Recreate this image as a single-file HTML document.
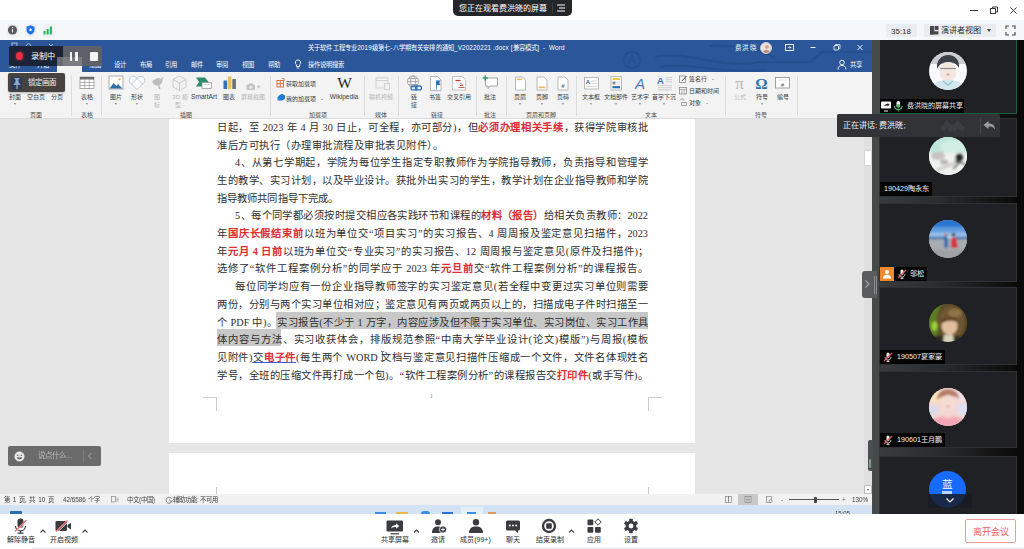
<!DOCTYPE html>
<html lang="zh-CN"><head><meta charset="utf-8">
<style>
html,body{margin:0;padding:0;}
body{width:1024px;height:549px;overflow:hidden;position:relative;background:#fff;font-family:"Liberation Sans",sans-serif;}
.a{position:absolute;}
.t{position:absolute;white-space:nowrap;line-height:1;}
/* top bars */
#top1{left:0;top:0;width:1024px;height:20px;background:#fff;}
#top2{left:0;top:20px;width:1024px;height:20px;background:#f6f7f9;}
#pill{left:453px;top:0;width:119px;height:16px;background:#25262a;border-radius:0 0 5px 5px;}
/* share */
#share{left:0;top:40px;width:872px;height:474px;background:#e6e6e6;overflow:hidden;}
#sharein{position:absolute;left:0;top:0;width:872px;height:474px;filter:blur(0.45px);}
#wtitle{left:0;top:0;width:875px;height:32px;background:#2b579a;}
#ribbon{left:0;top:32px;width:875px;height:47px;background:#f3f3f3;box-sizing:border-box;border-bottom:1px solid #dcdcdc;}
#page1{left:169px;top:79px;width:526px;height:324px;background:#fff;}
#page2{left:169px;top:413px;width:526px;height:41px;background:#fff;}
#status{left:0;top:454px;width:875px;height:11px;background:#f1f1f1;}
#taskbar{left:0;top:465px;width:875px;height:9px;background:#d3e3f3;}
.ln{position:absolute;left:217px;width:431px;font-family:"Liberation Serif",serif;font-size:10.3px;line-height:14px;height:14px;color:#2e2e2e;text-align:justify;text-align-last:justify;overflow:hidden;}
.ln.s{text-align-last:left;}
.r{color:#dc2f33;font-weight:bold;}
.hl{}
.u{text-decoration:underline;text-decoration-color:#3a5fd0;}

.rl{position:absolute;font-size:6px;line-height:8px;color:#3a3a3a;white-space:nowrap;transform:translateX(-50%);text-align:center;}
.rl.g{color:#b5b5b5;}
.gl{position:absolute;top:71px;font-size:6px;line-height:8px;color:#4a4a4a;white-space:nowrap;transform:translateX(-50%);}
.sep{position:absolute;top:36px;width:1px;height:40px;background:#dcdcdc;}
.tab{position:absolute;top:20px;font-size:6.3px;line-height:9px;color:#fff;white-space:nowrap;transform:translateX(-50%);}
.dd{position:absolute;top:63px;width:0;height:0;border-left:1.5px solid transparent;border-right:1.5px solid transparent;border-top:2px solid #888;transform:translateX(-50%);}
.ic{position:absolute;}
/* right panel */
#panel{left:872px;top:40px;width:152px;height:474px;background:#0d0d0e;overflow:hidden;}
.tile{position:absolute;left:7px;width:138px;background:#202124;border:1px solid #303134;box-sizing:border-box;}
.av{position:absolute;left:49px;width:38px;height:38px;border-radius:50%;overflow:hidden;}
.lab{position:absolute;left:0;bottom:0;height:14px;background:#050505;color:#f4f4f4;font-size:7.200px;line-height:14.500px;padding:0 3px 0 4px;white-space:nowrap;}
/* bottom */
#bottom{left:0;top:514px;width:1024px;height:35px;background:#fff;}
.bl{position:absolute;top:20.700px;font-size:7px;color:#2c2c2c;white-space:nowrap;transform:translateX(-50%);line-height:9px;}
</style></head><body>
<div id="top1" class="a"></div>
<div id="top2" class="a"></div>
<div id="pill" class="a"></div>

<div class="t" style="left:459px;top:3.500px;font-size:8px;line-height:9px;color:#fff;">您正在观看费洪晓的屏幕</div>
<div class="a" style="left:552px;top:3px;width:1px;height:10px;background:#3d3e42;"></div>
<svg class="a" style="left:557px;top:4px;" width="9" height="8" viewBox="0 0 9 8" stroke="#fff" stroke-width="1"><path d="M0 1h8M2 4h6M0 7h8"/></svg>
<svg class="a" style="left:960px;top:2px;" width="64" height="16" viewBox="0 0 64 16" fill="none" stroke="#3a3a3a" stroke-width="1"><path d="M10 8.500h8"/><rect x="30.500" y="6.500" width="5" height="5"/><path d="M32.500 6.500v-1.500h5v5h-2"/><path d="M50.500 5.500l6 6M56.500 5.500l-6 6"/></svg>
<div class="a" style="left:6.500px;top:23.500px;width:12px;height:13px;background:#eef0f3;border-radius:2px;"></div><div class="a" style="left:24.500px;top:23.500px;width:12px;height:13px;background:#eef0f3;border-radius:2px;"></div><div class="a" style="left:42.500px;top:23.500px;width:12px;height:13px;background:#eef0f3;border-radius:2px;"></div>
<svg class="a" style="left:7px;top:24px;" width="50" height="12" viewBox="0 0 50 12"><circle cx="5.500" cy="6" r="4.600" fill="#5a5a5a"/><path d="M5.500 5.200v3.200" stroke="#fff" stroke-width="1.100"/><circle cx="5.500" cy="3.600" r=".7" fill="#fff"/><path d="M23.500 1.300l4 1.400v3.300c0 2.600-2 4-4 4.800-2-.8-4-2.200-4-4.800v-3.300z" fill="#1f6ff2"/><circle cx="23.500" cy="5.800" r="1.300" fill="#fff"/><rect x="36.500" y="7" width="2" height="3.500" fill="#1fb35a"/><rect x="39.700" y="5" width="2" height="5.500" fill="#1fb35a"/><rect x="42.900" y="2.500" width="2" height="8" fill="#1fb35a"/></svg>
<div class="a" style="left:886px;top:24px;width:31px;height:13px;background:#eaecf0;border-radius:1px;"></div>
<div class="t" style="left:891px;top:26.500px;font-size:8px;line-height:9px;color:#333;">35:18</div>
<div class="a" style="left:924px;top:24px;width:72px;height:13px;background:#eaecf0;border-radius:1px;"></div>
<svg class="a" style="left:930px;top:26px;" width="9" height="9" viewBox="0 0 9 9" fill="#45474c"><rect x="0" y="0" width="4.200" height="8.500"/><rect x="4.800" y="0" width="3.700" height="4"/><rect x="4.800" y="4.600" width="3.700" height="3.900" fill="#fff"/><rect x="0" y="5.200" width="8.500" height="3.300"/></svg>
<div class="t" style="left:941px;top:26px;font-size:8px;line-height:9px;color:#2a2a2a;">演讲者视图</div>
<div class="a" style="left:987px;top:29px;width:0;height:0;border-left:2px solid transparent;border-right:2px solid transparent;border-top:3px solid #444;"></div>
<svg class="a" style="left:1005px;top:25px;" width="11" height="11" viewBox="0 0 11 11" fill="none" stroke="#444" stroke-width="1.100"><path d="M1 4v-3h3M7 1h3v3M10 7v3h-3M4 10h-3v-3"/></svg>
<div id="share" class="a"><div id="sharein">
  <div id="wtitle" class="a"></div>
  <div id="ribbon" class="a"></div>
  
  <!--WORD-->
  <svg class="a" style="left:560px;top:0;" width="315" height="32" viewBox="0 0 315 32">
    <g fill="none" stroke="#24508f" stroke-width="2.2">
      <circle cx="72" cy="20" r="8"/><path d="M68 24 L72 16 L76 24 M70 21h4" stroke-width="1.5"/>
      <path d="M95 17 C130 10 160 30 200 22 L250 22 L262 12 L315 12"/>
      <path d="M100 27 C130 22 160 34 205 30"/>
      <path d="M150 6 C175 4 200 10 215 18"/>
    </g>
  </svg>
  <div class="t" style="left:308px;top:4px;font-size:6.3px;letter-spacing:.15px;line-height:8px;color:#fff;">关于软件工程专业2019级第七-八学期有关安排的通知_V20220221 .docx [兼容模式]&nbsp; -&nbsp; Word</div>
  <div class="t" style="left:735px;top:3.5px;font-size:6.5px;line-height:8px;color:#fff;letter-spacing:.3px;">费洪晓</div>
  <div class="a" style="left:760px;top:1.5px;width:12px;height:12px;border-radius:50%;background:#e9e4e0;border:0.5px solid #c8c8d0;box-sizing:border-box;overflow:hidden;"><div class="a" style="left:3.5px;top:2.5px;width:4px;height:4px;border-radius:50%;background:#d9a58a;"></div><div class="a" style="left:2px;top:7px;width:7px;height:6px;border-radius:3px 3px 0 0;background:#c4897a;"></div></div>
  <svg class="a" style="left:784px;top:2px;" width="84" height="12" viewBox="0 0 84 12" fill="none" stroke="#fff" stroke-width="0.9">
    <rect x="1.5" y="2.5" width="8" height="6"/><path d="M4 5.5h3M5.5 4.2l1.3 1.3-1.3 1.3" stroke-width=".7"/>
    <path d="M26.5 5.5h5"/>
    <rect x="50" y="3.5" width="4.5" height="4.5" rx="1"/><path d="M51.5 3.5v-1h4.5v4h-1.5" stroke-width=".7"/>
    <path d="M73.5 3l5 5M78.500 3l-5 5"/>
  </svg>
  <div class="tab" style="left:15px;">文件</div><div class="tab" style="left:43px;">开始</div><div class="tab" style="left:69px;color:#2b579a;">插入</div><div class="tab" style="left:95px;">绘图</div>
  <svg class="a" style="left:10px;top:2px;" width="50" height="6" viewBox="0 0 50 6" fill="none" stroke="#c9d6ea" stroke-width=".8"><rect x="2" y="1" width="5" height="4.500"/><path d="M16 4c1-3 4-3 5 0M39 2l2 2 2-2"/></svg>
  <div class="tab" style="left:120px;">设计</div><div class="tab" style="left:146px;">布局</div><div class="tab" style="left:171px;">引用</div><div class="tab" style="left:197px;">邮件</div><div class="tab" style="left:222px;">审阅</div><div class="tab" style="left:248px;">视图</div><div class="tab" style="left:274px;">帮助</div>
  <svg class="a" style="left:294px;top:19px;" width="8" height="11" viewBox="0 0 8 11" fill="none" stroke="#fff" stroke-width=".9"><path d="M4 1a2.6 2.6 0 0 1 1.6 4.7V7.5H2.400V5.700A2.600 2.600 0 0 1 4 1zM2.800 9h2.400"/></svg>
  <div class="tab" style="left:326px;">操作说明搜索</div>
  <svg class="a" style="left:837px;top:19px;" width="10" height="11" viewBox="0 0 10 11" fill="none" stroke="#fff" stroke-width=".9"><circle cx="5" cy="3.500" r="2.300"/><path d="M1 10.500c0-3 1.800-4 4-4s4 1 4 4"/></svg>
  <div class="tab" style="left:856px;">共享</div>
  <!-- insert tab active -->
  <div class="a" style="left:57px;top:26px;width:25px;height:7px;background:#f3f3f3;"></div>
  <!-- ribbon separators -->
  <div class="sep" style="left:71px;"></div><div class="sep" style="left:101px;"></div><div class="sep" style="left:270px;"></div><div class="sep" style="left:364px;"></div><div class="sep" style="left:398px;"></div><div class="sep" style="left:476px;"></div><div class="sep" style="left:506px;"></div><div class="sep" style="left:576px;"></div><div class="sep" style="left:725px;"></div><div class="sep" style="left:797px;"></div>
  <!-- group labels -->
  <div class="gl" style="left:36px;">页面</div><div class="gl" style="left:87px;">表格</div><div class="gl" style="left:186px;">插图</div><div class="gl" style="left:318px;">加载项</div><div class="gl" style="left:381px;">媒体</div><div class="gl" style="left:437px;">链接</div><div class="gl" style="left:490px;">批注</div><div class="gl" style="left:541px;">页眉和页脚</div><div class="gl" style="left:651px;">文本</div><div class="gl" style="left:761px;">符号</div>
  <!-- big button labels -->
  <div class="rl" style="left:15px;top:52.500px;">封面</div><div class="rl" style="left:36px;top:52.500px;">空白页</div><div class="rl" style="left:57px;top:52.500px;">分页</div><div class="dd" style="left:15px;"></div>
  <div class="rl" style="left:87px;top:52.500px;">表格</div><div class="dd" style="left:87px;"></div>
  <div class="rl" style="left:116px;top:52.500px;">图片</div><div class="dd" style="left:116px;"></div>
  <div class="rl" style="left:137px;top:52.500px;">形状</div><div class="dd" style="left:137px;"></div>
  <div class="rl g" style="left:157px;top:52.500px;">图<br>标</div>
  <div class="rl g" style="left:180px;top:52.500px;">3D 模<br>型 -</div>
  <div class="rl" style="left:204px;top:52.500px;font-size:6.6px;">SmartArt</div>
  <div class="rl" style="left:229px;top:52.500px;">图表</div>
  <div class="rl g" style="left:253px;top:52.500px;">屏幕截图</div>
  <div class="t" style="left:286px;top:39.500px;font-size:6px;line-height:8px;color:#3a3a3a;">获取加载项</div>
  <div class="t" style="left:286px;top:55px;font-size:6px;line-height:8px;color:#3a3a3a;">我的加载项&nbsp;&nbsp; -</div>
  <div class="rl" style="left:344px;top:52.500px;font-size:6.6px;">Wikipedia</div>
  <div class="rl g" style="left:381px;top:52.500px;">联机视频</div>
  <div class="rl" style="left:414px;top:52.500px;">链<br>接</div>
  <div class="rl" style="left:435px;top:52.500px;">书签</div>
  <div class="rl" style="left:459px;top:52.500px;">交叉引用</div>
  <div class="rl" style="left:490px;top:52.500px;">批注</div>
  <div class="rl" style="left:520px;top:52.500px;">页眉</div><div class="dd" style="left:520px;"></div>
  <div class="rl" style="left:542px;top:52.500px;">页脚</div><div class="dd" style="left:542px;"></div>
  <div class="rl" style="left:563px;top:52.500px;">页码</div><div class="dd" style="left:563px;"></div>
  <div class="rl" style="left:591px;top:52.500px;">文本框</div><div class="dd" style="left:591px;"></div>
  <div class="rl" style="left:616px;top:52.500px;">文档部件</div><div class="dd" style="left:616px;"></div>
  <div class="rl" style="left:640px;top:52.500px;">艺术字</div><div class="dd" style="left:640px;"></div>
  <div class="rl" style="left:664px;top:52.500px;">首字下沉</div><div class="dd" style="left:664px;"></div>
  <div class="t" style="left:689px;top:35px;font-size:6px;line-height:8px;color:#3a3a3a;">签名行&nbsp;&nbsp; -</div>
  <div class="t" style="left:689px;top:47px;font-size:6px;line-height:8px;color:#3a3a3a;">日期和时间</div>
  <div class="t" style="left:689px;top:58.500px;font-size:6px;line-height:8px;color:#3a3a3a;">对象&nbsp;&nbsp; -</div>
  <div class="rl g" style="left:740px;top:52.500px;">公式</div>
  <div class="rl" style="left:762px;top:52.500px;">符号</div><div class="dd" style="left:762px;"></div>
  <div class="rl" style="left:783px;top:52.500px;">编号</div>

  <svg class="a" style="left:0;top:32px;" width="875" height="47" viewBox="0 32 875 47">
    <!-- table -->
    <rect x="80" y="37" width="14" height="11.500" fill="#fff" stroke="#8a8a8a" stroke-width=".7"/><rect x="80" y="37" width="14" height="2.500" fill="#6b6b6b"/>
    <path d="M80 42.500h14M80 45.500h14M84.700 39.500v9M89.300 39.500v9" stroke="#8a8a8a" stroke-width=".6"/>
    <!-- picture -->
    <rect x="109" y="36" width="14" height="13" fill="#fdfdfd" stroke="#9a9a9a" stroke-width=".8"/>
    <path d="M109.500 48.600l4.200-5.600 2.600 3 1.700-2 4.500 4.600z" fill="#2f6fa8"/><circle cx="119.500" cy="39.300" r="1.100" fill="#e5b94a"/>
    <!-- shapes -->
    <g fill="#fbfbfb" stroke="#b9c3cc" stroke-width=".9"><circle cx="133.500" cy="40.500" r="4.300"/><circle cx="140.500" cy="40.500" r="4.300"/><path d="M137 38.500l5.500 5.500-5.500 5.500-5.500-5.500z"/></g>
    <!-- icons (grey bird) -->
    <path d="M152 41.500c2-1 3.500-3.500 6.500-3.500 1.500 0 2 1 2 1l3-2.500-1 3.500c0 3-1.500 4-3 5l1 4h-1.500l-1-3.500c-2 .5-4-.5-6-4z" fill="#bdbdbd"/>
    <!-- 3d cube -->
    <g fill="none" stroke="#c4c4c4" stroke-width=".9"><path d="M179.500 36l6.500 3.500v7.500l-6.500 3.500-6.500-3.500v-7.500z"/><path d="M173 39.500l6.500 3.500 6.500-3.500M179.500 43v7.500"/></g>
    <!-- smartart -->
    <path d="M196 37.500h9l3.500 4.500-3.500 4.500h-9l3-4.500z" fill="#2e8b6e"/><rect x="202" y="42.500" width="9.500" height="6" fill="#fff" stroke="#8a8a8a" stroke-width=".7"/><path d="M203.500 44.500h6.500" stroke="#bbb" stroke-width=".6"/>
    <!-- chart -->
    <rect x="223.500" y="40.500" width="3.600" height="8.500" fill="#3b6fb5"/><rect x="227.800" y="36.500" width="3.600" height="12.500" fill="#e5c355"/><rect x="232.300" y="39" width="3.600" height="10" fill="#6d7278"/>
    <!-- screenshot grey -->
    <g fill="#c2c2c2"><rect x="246.500" y="44.500" width="8.500" height="5.500" rx="1"/><rect x="249" y="43.300" width="3.500" height="1.500"/><path d="M257 46.300h3.500v1h-3.500zM258.250 45h1v3.600h-1z"/></g><circle cx="250.750" cy="47.300" r="1.500" fill="#eee"/>
    <!-- get addins -->
    <g fill="none" stroke="#e0643c" stroke-width=".9"><rect x="277" y="40.500" width="6.500" height="6.500"/><path d="M277 43.700h6.500M280.250 40.500v6.500"/></g><path d="M281.500 38.500h2.500v2.500" fill="none" stroke="#e0643c" stroke-width=".8"/>
    <!-- my addins -->
    <path d="M279 55.500l3-1.700 3 1.700v3.400l-3 1.700h-4.500v-3.200z" fill="#1f7ad1"/><path d="M277 58.500l2.500 1.200" stroke="#8fc1ee" stroke-width=".6"/>
    <!-- W -->
    <text x="344.500" y="48" font-family="Liberation Serif, serif" font-size="15.500" fill="#1d1d1d" text-anchor="middle">W</text>
    <!-- online video grey -->
    <g fill="none" stroke="#cfcfcf" stroke-width=".9"><rect x="376" y="38" width="12" height="10"/><path d="M376 40.500h12M378 36.500v1.500M381 36.500v1.500M384 36.500v1.500M387 36.500v1.500"/><rect x="384.500" y="43.500" width="5" height="6" fill="#f3f3f3"/></g>
    <!-- link globe -->
    <g fill="none" stroke="#9b9b9b" stroke-width=".8"><circle cx="413" cy="41.500" r="5.600"/><ellipse cx="413" cy="41.500" rx="2.500" ry="5.600"/><path d="M407.400 41.500h11.200M408.300 38.500h9.400M408.300 44.500h9.400"/></g>
    <g fill="none" stroke="#2f6fb5" stroke-width="1.300"><rect x="411" y="46" width="6" height="3.800" rx="1.900"/><rect x="415.500" y="46" width="6" height="3.800" rx="1.900"/></g>
    <!-- bookmark -->
    <path d="M430.500 36.500h7l3.500 3.500v10.500h-10.500z" fill="#fff" stroke="#a5a5a5" stroke-width=".8"/><path d="M436 40.500h4.500l-1.200 2.200 1.200 2.300h-3.700v4.500h-.8z" fill="#2f6fb5"/>
    <!-- cross ref -->
    <path d="M452.500 36.500h10l3 3v10.500h-13z" fill="#fff" stroke="#b5b5b5" stroke-width=".8"/><path d="M455.500 40.500h5" stroke="#c0392b" stroke-width="1.300"/><path d="M460 42.500l3 3-3 0M458.500 47.500h6" fill="none" stroke="#c0392b" stroke-width=".8"/>
    <!-- comment -->
    <path d="M485.500 38h12v8h-7.500l-2 2.500v-2.500h-2.500z" fill="#fff" stroke="#9a9a9a" stroke-width=".9"/><path d="M482.500 38h5.500M485.250 35.300v5.500" stroke="#3b9b6d" stroke-width="1.400"/>
    <!-- header/footer/pagenum -->
    <g fill="#fff" stroke="#a8a8a8" stroke-width=".8"><path d="M515.500 37h7l3 3v10h-10z"/><path d="M537 37h7l3 3v10h-10z"/><path d="M558 37h7l3 3v10h-10z"/></g>
    <rect x="517" y="38.500" width="5" height="1.600" fill="#e9b96e"/><rect x="538.500" y="46.500" width="7" height="1.800" fill="#e9b96e"/>
    <text x="563" y="47.500" font-size="6" font-family="Liberation Sans, sans-serif" fill="#3b6fb5" text-anchor="middle" font-weight="bold">#</text>
    <!-- textbox -->
    <rect x="584.500" y="37.500" width="14" height="11.500" fill="#fff" stroke="#a8a8a8" stroke-width=".8"/><text x="588" y="44" font-size="6" font-family="Liberation Sans, sans-serif" fill="#2f5f9e" text-anchor="middle" font-weight="bold">A</text><path d="M591.500 41h5.500M591.500 43.500h5.500M586 46.500h11" stroke="#c3c3c3" stroke-width=".7"/>
    <!-- quick parts -->
    <rect x="611" y="36.500" width="10.500" height="13.500" fill="#fff" stroke="#a8a8a8" stroke-width=".8"/><rect x="612.500" y="38" width="7.500" height="2" fill="#e5c355"/><rect x="612.500" y="41.500" width="3" height="3" fill="#8a8a8a"/><path d="M616.500 42h3.500M616.500 44h3.500" stroke="#bbb" stroke-width=".6"/><rect x="612.500" y="46" width="7.500" height="2.300" fill="#2f6fb5"/>
    <!-- wordart -->
    <text x="640" y="49" font-size="15" font-family="Liberation Sans, sans-serif" font-style="italic" fill="#4a7fc1" text-anchor="middle">A</text>
    <!-- dropcap -->
    <text x="660.500" y="43.500" font-size="9.500" font-family="Liberation Sans, sans-serif" fill="#3b6fb5" text-anchor="middle" font-weight="bold">A</text><path d="M665.500 37.500h6.500M665.500 39.700h6.500M665.500 41.900h6.500M657.500 45.500h14.500M657.500 47.700h14.500M657.500 49.900h14.500" stroke="#c3c3c3" stroke-width=".8"/>
    <!-- small icons text group -->
    <g fill="none" stroke="#8a8a8a" stroke-width=".8"><rect x="679.500" y="36" width="6" height="6.500"/><path d="M682 41l4.500-5" stroke="#555" stroke-width="1"/><rect x="679.500" y="47.500" width="7" height="6.500"/><path d="M679.500 49.500h7M682 49.500v4.500M684.300 49.500v4.500" stroke-width=".6"/><path d="M680 60.500c0-2 4-2 4 0M681.500 62.500h5v3h-5z"/></g>
    <!-- pi omega number -->
    <text x="739.500" y="49" font-size="17" font-family="Liberation Serif, serif" fill="#b9b9b9" text-anchor="middle">π</text>
    <text x="761.500" y="49" font-size="15.500" font-family="Liberation Serif, serif" fill="#2f6fb5" text-anchor="middle" font-weight="bold">Ω</text>
    <rect x="775.500" y="37.500" width="14" height="10.500" fill="#fff" stroke="#8a8a8a" stroke-width=".8"/><text x="782.500" y="46.500" font-size="5.500" font-family="Liberation Sans, sans-serif" fill="#555" text-anchor="middle">#</text><path d="M778 40h9" stroke="#ccc" stroke-width=".6"/>
  </svg>
  <!-- recording widget -->
  <div class="a" style="left:9px;top:6px;width:54px;height:20px;background:#1c2337;border-radius:2px 0 0 2px;"></div>
  <div class="a" style="left:63px;top:6px;width:39px;height:20px;background:#5d6068;border-radius:0 2px 2px 0;"></div>
  <div class="a" style="left:57px;top:17px;width:25px;height:9px;background:#84868b;opacity:.75;"></div>
  <div class="a" style="left:15.500px;top:12.200px;width:7.600px;height:7.600px;border-radius:50%;background:#ea3040;box-shadow:0 0 0 2px #3a2438;"></div>
  <div class="t" style="left:31px;top:11.500px;font-size:8.200px;line-height:9px;color:#fff;">录制中</div>
  <div class="a" style="left:69.500px;top:11.500px;width:2.600px;height:9px;background:#f2f2f2;"></div><div class="a" style="left:75px;top:11.500px;width:2.600px;height:9px;background:#f2f2f2;"></div>
  <div class="a" style="left:89.500px;top:11.500px;width:8.500px;height:9px;background:#f4f4f4;border-radius:1px;"></div>
  <!-- lock tooltip -->
  <div class="a" style="left:8px;top:33px;width:57px;height:19px;background:#48423f;border-radius:2px;box-shadow:0 1px 2px rgba(0,0,0,.25);"></div>
  <div class="a" style="left:11px;top:37px;width:10.500px;height:13px;background:#2c3b57;border-radius:1px;"></div>
  <svg class="a" style="left:11.500px;top:36.500px;" width="10" height="13" viewBox="0 0 10 13"><path d="M2.500 1h5v1.200h-1v3l1.800 1.800v1h-6.600v-1l1.800-1.800v-3h-1z" fill="#8ea6c8"/><path d="M5 8v4" stroke="#b9c6da" stroke-width="1"/></svg>
  <div class="t" style="left:28px;top:38.500px;font-size:7.500px;line-height:8px;color:#f1f1f1;">锁定画面</div>

  <!--/WORD-->
  <div id="page1" class="a"></div>
  <div id="page2" class="a"></div>
  <div class="a" style="left:276px;top:271.500px;width:372px;height:17.500px;background:#c8c8c8;"></div><div class="a" style="left:217px;top:289px;width:63.500px;height:17px;background:#c8c8c8;"></div>
  <!--DOC-->
  <div class="ln" style="top:81.0px;">日起，至 2023 年 4 月 30 日止，可全程，亦可部分)，但<span class="r">必须办理相关手续</span>，获得学院审核批</div>
  <div class="ln" style="top:98.7px;width:226px;">准后方可执行（办理审批流程及审批表见附件）。</div>
  <div class="ln" style="top:116.4px;left:235px;width:413px;">4、从第七学期起，学院为每位学生指定专职教师作为学院指导教师，负责指导和管理学</div>
  <div class="ln" style="top:134.0px;">生的教学、实习计划，以及毕业设计。获批外出实习的学生，教学计划在企业指导教师和学院</div>
  <div class="ln" style="top:151.7px;width:121px;">指导教师共同指导下完成。</div>
  <div class="ln" style="top:169.4px;left:235px;width:413px;">5、每个同学都必须按时提交相应各实践环节和课程的<span class="r">材料（报告）</span>给相关负责教师：2022</div>
  <div class="ln" style="top:187.1px;">年<span class="r">国庆长假结束前</span>以班为单位交“项目实习”的实习报告、4 周周报及鉴定意见扫描件，2023</div>
  <div class="ln" style="top:204.8px;">年<span class="r">元月 4 日前</span>以班为单位交“专业实习”的实习报告、12 周周报与鉴定意见(原件及扫描件)；</div>
  <div class="ln" style="top:222.4px;">选修了“软件工程案例分析”的同学应于 2023 年<span class="r">元旦前</span>交“软件工程案例分析”的课程报告。</div>
  <div class="ln" style="top:240.1px;left:235px;width:413px;">每位同学均应有一份企业指导教师签字的实习鉴定意见(若全程中变更过实习单位则需要</div>
  <div class="ln" style="top:257.8px;">两份，分别与两个实习单位相对应；鉴定意见有两页或两页以上的，扫描成电子件时扫描至一</div>
  <div class="ln" style="top:275.5px;">个 PDF 中)。<span class="hl">实习报告(不少于 1 万字，内容应涉及但不限于实习单位、实习岗位、实习工作具</span></div>
  <div class="ln" style="top:293.2px;"><span class="hl">体内容与方法</span>、实习收获体会，排版规范参照“中南大学毕业设计(论文)模版”)与周报(模板</div>
  <div class="ln" style="top:310.8px;">见附件)<span class="u">交</span><span class="r u">电子件</span>(每生两个 WORD 文档与鉴定意见扫描件压缩成一个文件，文件名体现姓名</div>
  <div class="ln" style="top:328.5px;">学号，全班的压缩文件再打成一个包)。“软件工程案例分析”的课程报告交<span class="r">打印件</span>(或手写件)。</div>
  <!--/DOC-->

  <!-- page marks -->
  <div class="a" style="left:203px;top:357px;width:13px;height:1px;background:#cbcbcb;"></div><div class="a" style="left:216px;top:357px;width:1px;height:14px;background:#cbcbcb;"></div>
  <div class="a" style="left:648px;top:357px;width:14px;height:1px;background:#cbcbcb;"></div><div class="a" style="left:648px;top:357px;width:1px;height:14px;background:#cbcbcb;"></div>
  <div class="t" style="left:430px;top:353px;font-size:5.500px;line-height:6px;color:#777;font-family:'Liberation Serif',serif;">1</div>
  <div class="a" style="left:216px;top:447px;width:1px;height:7px;background:#cbcbcb;"></div><div class="a" style="left:648px;top:447px;width:1px;height:7px;background:#cbcbcb;"></div>
  <!-- I-beam cursor -->
  <svg class="a" style="left:379.500px;top:310.500px;" width="5" height="10" viewBox="0 0 6 12" fill="none" stroke="#222" stroke-width=".8"><path d="M1 .5h1.500l.5.500.5-.500h1.500M3 1v10M1 11.500h1.500l.5-.500.5.500h1.500"/></svg>
  <!-- scrollbar -->
  <div class="a" style="left:864px;top:79px;width:8px;height:375px;background:#e0e0e0;"></div>
  <div class="a" style="left:864px;top:110px;width:7.500px;height:16px;background:#fff;border:0.500px solid #d5d5d5;box-sizing:border-box;"></div>
  <div class="a" style="left:864px;top:445px;width:8px;height:8.500px;background:#fff;border:0.500px solid #bdbdbd;box-sizing:border-box;"></div>
  <div class="a" style="left:866.500px;top:448.500px;width:0;height:0;border-left:1.700px solid transparent;border-right:1.700px solid transparent;border-top:2.200px solid #555;"></div>
  <!-- chat widget -->
  <div class="a" style="left:8px;top:406px;width:93px;height:20px;background:#6b6b6b;border-radius:2px;"></div>
  <svg class="a" style="left:14px;top:411px;" width="11" height="11" viewBox="0 0 11 11"><circle cx="5.500" cy="5.500" r="5" fill="#e9e9e9"/><circle cx="3.700" cy="4.300" r=".8" fill="#666"/><circle cx="7.300" cy="4.300" r=".8" fill="#666"/><path d="M2.800 6.300c.5 2.800 4.900 2.800 5.400 0z" fill="#666"/></svg>
  <div class="t" style="left:38px;top:412px;font-size:7.500px;line-height:8px;color:#b9b9b9;">说点什么...</div>
  <div class="a" style="left:82.500px;top:409px;width:1px;height:14px;background:#7d7d7d;"></div>
  <svg class="a" style="left:87px;top:412px;" width="6" height="8" viewBox="0 0 6 8" fill="none" stroke="#aaa" stroke-width="1"><path d="M4.500 1l-3 3 3 3"/></svg>
  <div id="status" class="a">
    <div class="t" style="left:4px;top:2px;font-size:6.300px;line-height:7px;color:#3c3c3c;word-spacing:1px;">第 1 页, 共 10 页</div>
    <div class="t" style="left:63px;top:2px;font-size:6.300px;line-height:7px;color:#3c3c3c;">42/6586 个字</div>
    <svg class="a" style="left:111px;top:2px;" width="8" height="7" viewBox="0 0 8 7" fill="none" stroke="#777" stroke-width=".6"><rect x=".5" y=".5" width="4" height="5.500"/><path d="M5.500 2h2M5.500 3.500h2M5.500 5h2"/></svg>
    <div class="t" style="left:127px;top:2px;font-size:6.300px;line-height:7px;color:#3c3c3c;">中文(中国)</div>
    <svg class="a" style="left:165px;top:1.500px;" width="8" height="8" viewBox="0 0 8 8" fill="none" stroke="#555" stroke-width=".7"><path d="M6.500 2.500a3 3 0 1 0 .5 2.500"/><path d="M4.500 3.500l1.200 2 1.800-1"/></svg>
    <div class="t" style="left:173px;top:2px;font-size:6.300px;line-height:7px;color:#3c3c3c;">辅助功能: 不可用</div>
    <svg class="a" style="left:722px;top:0;" width="56" height="11" viewBox="0 0 56 11" fill="none" stroke="#777" stroke-width=".6"><rect x="3.500" y="2.500" width="3" height="6"/><rect x="6.500" y="2.500" width="3" height="6"/><rect x="16" y="0" width="20" height="11" fill="#c9c9c9" stroke="none"/><rect x="23" y="2.500" width="6" height="6" fill="#ddd"/><path d="M24 4h4M24 5.500h4M24 7h4"/><rect x="44.500" y="2.500" width="5" height="6"/><circle cx="48.500" cy="7" r="1.500" fill="#f1f1f1"/></svg>
    <div class="t" style="left:781px;top:2px;font-size:6.500px;line-height:7px;color:#666;">-</div>
    <div class="a" style="left:789px;top:5px;width:50px;height:1px;background:#555;"></div>
    <div class="a" style="left:814px;top:2.500px;width:3px;height:6px;background:#444;border-radius:1px;"></div>
    <div class="t" style="left:842px;top:2px;font-size:6.500px;line-height:7px;color:#666;">+</div>
    <div class="t" style="left:852px;top:2px;font-size:6.300px;line-height:7px;color:#3c3c3c;">130%</div>
  </div>
  <div id="taskbar" class="a">
    <div class="a" style="left:10px;top:6px;width:12px;height:3px;background:#2a6fb5;border-radius:1px 1px 0 0;"></div>
    <div class="a" style="left:375px;top:6.500px;width:11px;height:2.500px;background:#3a8fe0;"></div>
    <div class="a" style="left:396px;top:6.500px;width:12px;height:2.500px;background:#e8b84a;"></div>
    <div class="a" style="left:421px;top:6px;width:9px;height:3px;background:#3a8fe0;border-radius:4px 4px 0 0;"></div>
    <div class="a" style="left:442px;top:6.500px;width:11px;height:2.500px;background:#2a72d8;"></div>
    <div class="a" style="left:461px;top:2px;width:22px;height:7px;background:#e6eef8;"></div>
    <div class="a" style="left:467px;top:6.500px;width:9px;height:2.500px;background:#3a8fe0;"></div>
    <div class="a" style="left:488px;top:6.500px;width:8px;height:2.500px;background:#e09a5a;"></div>
    <div class="t" style="left:835px;top:4.500px;font-size:6px;line-height:6px;color:#333;">15:05</div>
  </div>
</div></div>
<div id="panel" class="a">
<div class="a" style="left:0;top:0;width:7px;height:474px;background:#46494a;"></div>
<div class="a" style="left:145px;top:0;width:7px;height:474px;background:#0a0a0a;"></div>
<div class="tile" style="top:0;height:74px;border-color:#1f5f41;border-top:none;">
  <div class="av" style="top:11.5px;"><svg width="38" height="38" viewBox="0 0 38 38" style="position:absolute;left:0;top:0;"><defs><filter id="f1" x="-20%" y="-20%" width="140%" height="140%"><feGaussianBlur stdDeviation="0.6"/></filter></defs><rect width="38" height="38" fill="#f7f9fa"/><g filter="url(#f1)">
<rect x="-2" y="-2" width="42" height="14" fill="#c9cdd2"/>
<path d="M8 17c-1-9 5-14 11-14s12 4 11 13c-2-4-5-6-11-6s-9 3-11 7z" fill="#3b4048"/>
<ellipse cx="19" cy="20" rx="8.500" ry="10" fill="#f3e7e0"/>
<path d="M11 16.500h16" stroke="#8a8f96" stroke-width="1.200"/>
<ellipse cx="19" cy="22.500" rx="1.800" ry="1" fill="#d7a59a"/>
<path d="M2 40c1-9 7-12 17-12s16 3 17 12z" fill="#d3e7ee"/>
<path d="M14 29l5 4 5-4" stroke="#9fc0cc" stroke-width="1.500" fill="none"/>
</g></svg></div>
  <div class="lab" style="padding-left:27px;left:0;width:54px;font-size:7px;">费洪晓的屏幕共享
    <svg style="position:absolute;left:1px;top:2px;" width="24" height="11" viewBox="0 0 24 11"><rect x="0" y=".5" width="10" height="7" rx="1" fill="#f2f2f2"/><path d="M3 10h4" stroke="#f2f2f2" stroke-width="1"/><path d="M3 5.500c.5-2 2-2.500 3.500-2.500v-1l2 1.800-2 1.800v-1c-1.500 0-2.500.2-3.500.9z" fill="#222"/><rect x="15.500" y="0" width="3.600" height="6.500" rx="1.800" fill="#e9f5ec"/><path d="M13.500 5c0 4.500 7.600 4.500 7.600 0" fill="none" stroke="#58b96f" stroke-width="1.100"/><rect x="15.500" y="3" width="3.600" height="3.500" rx="1.600" fill="#58b96f"/><path d="M17.300 8.500v2" stroke="#58b96f" stroke-width="1"/></svg>
  </div>
</div>
<div class="a" style="left:7px;top:157px;width:138px;height:6px;background:linear-gradient(90deg,#3a3b3d 0%,#2a2b2d 45%,#0a0a0a 100%);"></div><div class="a" style="left:7px;top:242px;width:138px;height:5px;background:linear-gradient(90deg,#3a3b3d 0%,#2a2b2d 45%,#0a0a0a 100%);"></div><div class="a" style="left:7px;top:325px;width:138px;height:6px;background:linear-gradient(90deg,#3a3b3d 0%,#2a2b2d 45%,#0a0a0a 100%);"></div><div class="a" style="left:7px;top:408px;width:138px;height:8px;background:linear-gradient(90deg,#3a3b3d 0%,#2a2b2d 45%,#0a0a0a 100%);"></div>
<div class="tile" style="top:78px;height:79px;">
  <div class="av" style="top:18px;"><svg width="38" height="38" viewBox="0 0 38 38" style="position:absolute;left:0;top:0;"><defs><filter id="f2" x="-20%" y="-20%" width="140%" height="140%"><feGaussianBlur stdDeviation="1.0"/></filter></defs><rect width="38" height="38" fill="#eef3f0"/><g filter="url(#f2)">
<rect x="-2" y="-2" width="42" height="18" fill="#bfe5d8"/>
<ellipse cx="24" cy="10" rx="12" ry="7" fill="#d3eee5"/>
<rect x="-2" y="16" width="42" height="24" fill="#eef1ed"/>
<ellipse cx="9" cy="19" rx="7" ry="4" fill="#c9c3c1"/>
<ellipse cx="15" cy="25" rx="4" ry="2.500" fill="#b9b5b3"/>
<path d="M8 33l20-8" stroke="#cfcfca" stroke-width="3"/>
<circle cx="30.500" cy="20.500" r="4" fill="#262b2a"/>
<path d="M26 24l10 3M30 26l-6 6" stroke="#3c4241" stroke-width="1.500"/>
</g></svg></div>
  <div class="lab">190429陶永东</div>
</div>
<div class="tile" style="top:163px;height:79px;">
  <div class="av" style="top:15.8px;"><svg width="38" height="38" viewBox="0 0 38 38" style="position:absolute;left:0;top:0;"><defs><filter id="f3" x="-20%" y="-20%" width="140%" height="140%"><feGaussianBlur stdDeviation="0.8"/></filter></defs><rect width="38" height="38" fill="#a7acb1"/><g filter="url(#f3)">
<rect x="-2" y="-2" width="42" height="10" fill="#2b76d2"/>
<rect x="-2" y="7" width="42" height="6" fill="#5e9ce0"/>
<rect x="-2" y="12" width="42" height="6" fill="#8fbbe6"/>
<rect x="-2" y="17" width="42" height="2.500" fill="#3f729f"/>
<rect x="-2" y="19.500" width="42" height="20" fill="#a7acb1"/>
<rect x="-2" y="30" width="42" height="10" fill="#9da1a4"/>
<rect x="15.200" y="15" width="3.800" height="13" rx="1.500" fill="#2f6fae"/><circle cx="16.500" cy="14.500" r="1.600" fill="#c97a8a"/>
<path d="M22 17h5l2 11h-7z" fill="#cf3844"/><circle cx="24.500" cy="14.500" r="1.800" fill="#2a2f3a"/>
<path d="M18 17l5 1" stroke="#e9eef5" stroke-width="1.500"/>
</g></svg></div>
  <div class="a" style="left:0;bottom:0;width:14px;height:14px;background:#f08a2c;"><svg style="position:absolute;left:2px;top:2px;" width="10" height="10" viewBox="0 0 10 10" fill="#fff"><circle cx="5" cy="3" r="2"/><path d="M1 9.500c0-3 2-3.800 4-3.800s4 .8 4 3.800z"/></svg></div>
  <div class="lab" style="left:14px;padding-left:16px;">邬松<svg style="position:absolute;left:3px;top:2px;" width="10" height="10" viewBox="0 0 10 10"><rect x="3.500" y=".5" width="3" height="5.500" rx="1.500" fill="#eee"/><path d="M2 5c0 4 6 4 6 0M5 8v1.500M3.500 9.500h3" fill="none" stroke="#eee" stroke-width=".8"/><path d="M1 9l8-8" stroke="#e35a5a" stroke-width="1.300"/></svg></div>
</div>
<div class="tile" style="top:247px;height:78px;">
  <div class="av" style="top:15.5px;"><svg width="38" height="38" viewBox="0 0 38 38" style="position:absolute;left:0;top:0;"><defs><filter id="f4" x="-20%" y="-20%" width="140%" height="140%"><feGaussianBlur stdDeviation="1.0"/></filter></defs><rect width="38" height="38" fill="#5a4a26"/><g filter="url(#f4)">
<rect x="-2" y="-2" width="42" height="42" fill="#5a4a26"/>
<path d="M-2 -2h18c-8 6-10 18-6 32l-12 4z" fill="#5d7d24"/>
<ellipse cx="5.500" cy="22" rx="3" ry="4.500" fill="#9fd03a"/>
<path d="M10 24c-3-14 4-22 12-22 9 0 15 8 13 20-1 6-5 10-8 12l-12-2z" fill="#6e5632"/>
<ellipse cx="26" cy="9" rx="7" ry="4" fill="#8d7444"/>
<ellipse cx="20.500" cy="22" rx="8" ry="9" fill="#e0bd9c"/>
<path d="M12 17c3-4 9-5 15-3l1 4c-5-2-11-2-16 2z" fill="#5d4526"/>
<path d="M0 40c2-6 8-9 12-8l8 3 8-3c4 0 8 3 10 8z" fill="#2f2a1c"/>
<path d="M15 31h9l1 8h-11z" fill="#d7d5be"/>
</g></svg></div>
  <div class="lab" style="padding-left:17px;">190507夏家豪<svg style="position:absolute;left:3px;top:2px;" width="10" height="10" viewBox="0 0 10 10"><rect x="3.500" y=".5" width="3" height="5.500" rx="1.500" fill="#eee"/><path d="M2 5c0 4 6 4 6 0M5 8v1.500M3.500 9.500h3" fill="none" stroke="#eee" stroke-width=".8"/><path d="M1 9l8-8" stroke="#e35a5a" stroke-width="1.300"/></svg></div>
</div>
<div class="tile" style="top:331px;height:77px;">
  <div class="av" style="top:16px;"><svg width="38" height="38" viewBox="0 0 38 38" style="position:absolute;left:0;top:0;"><defs><filter id="f5" x="-20%" y="-20%" width="140%" height="140%"><feGaussianBlur stdDeviation="1.1"/></filter></defs><rect width="38" height="38" fill="#f3d7d3"/><g filter="url(#f5)">
<rect x="-2" y="-2" width="42" height="42" fill="#f3d7d3"/>
<ellipse cx="6" cy="8" rx="8" ry="7" fill="#f6e2bd"/>
<ellipse cx="4" cy="22" rx="5" ry="5" fill="#d9daf0"/>
<ellipse cx="34" cy="21" rx="6" ry="6" fill="#dbe0f3"/>
<ellipse cx="33" cy="9" rx="6" ry="5" fill="#f0dfe4"/>
<path d="M8 12c0-8 6-11 11-11s11 3 11 10c-3-3-7-3-11-3s-8 1-11 4z" fill="#b67f6a"/>
<ellipse cx="19" cy="15" rx="7" ry="8" fill="#f5dcd3"/>
<ellipse cx="19" cy="18.500" rx="1.800" ry="1" fill="#dba09c"/>
<path d="M-2 40c2-9 10-12 21-12s19 3 21 12z" fill="#f3a7b6"/>
<ellipse cx="19" cy="27" rx="6" ry="3" fill="#f6d3cf"/>
</g></svg></div>
  <div class="lab" style="padding-left:17px;">190601王月鹏<svg style="position:absolute;left:3px;top:2px;" width="10" height="10" viewBox="0 0 10 10"><rect x="3.500" y=".5" width="3" height="5.500" rx="1.500" fill="#eee"/><path d="M2 5c0 4 6 4 6 0M5 8v1.500M3.500 9.500h3" fill="none" stroke="#eee" stroke-width=".8"/><path d="M1 9l8-8" stroke="#e35a5a" stroke-width="1.300"/></svg></div>
</div>
<div class="tile" style="top:416px;height:70px;">
  <div class="av" style="top:14px;left:48.500px;width:37px;height:37px;background:#176bff;">
    <div class="t" style="left:13px;top:8px;font-size:10.500px;line-height:11px;color:#fff;">蓝</div>
    <div class="a" style="left:13.500px;top:20px;width:10px;height:2.500px;background:#cfe0ff;opacity:.9;"></div>
  </div>
</div>
<div class="a" style="left:56px;top:453.500px;width:44px;height:14px;background:rgba(25,27,34,.82);border-radius:2px;"></div>
<svg class="a" style="left:73px;top:457px;" width="10" height="7" viewBox="0 0 10 7" fill="none" stroke="#fff" stroke-width="1.200"><path d="M1.500 1.500l3.500 3.500 3.500-3.500"/></svg>
</div>

<!-- speaking tooltip -->
<div class="a" style="left:837px;top:113.500px;width:163px;height:23.500px;background:#323337;border-radius:1.500px;overflow:hidden;">
  <div class="t" style="left:6px;top:7.500px;font-size:8px;line-height:9px;color:#f2f2f2;">正在讲话: 费洪晓;</div>
  <svg class="a" style="left:100px;top:2px;" width="40" height="20" viewBox="0 0 40 20" fill="#3d3e43"><path d="M3 12l7-8 7 8-3.500 4-3.500-4-3.500 4zM14 12l7-8 7 8-3.500 4-3.500-4-3.500 4z"/></svg>
  <div class="a" style="left:143px;top:4px;width:1px;height:16px;background:#45464a;"></div>
  <svg class="a" style="left:146px;top:6px;" width="13" height="11" viewBox="0 0 13 11" fill="#9d9ea1"><path d="M5.500 1v2.500c4 0 6.500 2 6.500 6-1.500-2.500-3.500-3-6.500-3v2.500l-5-4z"/></svg>
</div>
<!-- collapse handle -->
<div class="a" style="left:862px;top:271px;width:15px;height:26.500px;background:#5a5c5e;border-radius:3px 0 0 3px;"></div>
<svg class="a" style="left:864px;top:279px;" width="7" height="10" viewBox="0 0 7 10" fill="none" stroke="#a5a5a5" stroke-width="1.100"><path d="M1.500 1.500l3.500 3.500-3.500 3.500"/></svg>
<div class="a" style="left:873.500px;top:276px;width:1px;height:18px;background:#8a8c8e;"></div><div class="a" style="left:875.500px;top:276px;width:1px;height:18px;background:#8a8c8e;"></div>
<div class="a" style="left:867.500px;top:440px;width:5px;height:31px;background:#4a4f51;border-radius:2px 0 0 2px;"></div>
<div class="a" style="left:869px;top:459px;width:2px;height:9px;background:#7f9e90;border-radius:1px;"></div>
<div id="bottom" class="a">
  <svg class="a" style="left:0;top:0;" width="1024" height="35" viewBox="0 514 1024 35">
    <!-- mic muted -->
    <rect x="17.500" y="518.500" width="6" height="9.500" rx="3" fill="#3a3c42"/><path d="M15.500 526c0 6.500 10 6.500 10 0M20.500 531v2M17.500 533.200h6" fill="none" stroke="#3a3c42" stroke-width="1.200"/><path d="M15 531.500l11.500-11.500" stroke="#f07575" stroke-width="1.600"/><path d="M15.800 532.600l11.500-11.500" stroke="#fff" stroke-width=".8"/>
    <!-- camera -->
    <rect x="55.500" y="521" width="11.500" height="10" rx="1.200" fill="#3a3c42"/><path d="M67.500 525l3.500-2.300v6.800l-3.500-2.300z" fill="#3a3c42"/><path d="M56 531.500l11.500-11" stroke="#f07575" stroke-width="1.600"/><path d="M57 532.500l11.500-11" stroke="#fff" stroke-width=".8"/>
    <!-- carets -->
    <g fill="none" stroke="#444" stroke-width="1.100"><path d="M40.500 532.500l2.500-2.500 2.500 2.500M82.500 532.500l2.500-2.500 2.500 2.500M414 532.500l2.500-2.500 2.500 2.500M569 532.500l2.500-2.500 2.500 2.500"/></g>
    <!-- share screen -->
    <rect x="386.500" y="520.500" width="16.500" height="11" rx="1.200" fill="#3a3c42"/><path d="M390.500 533.800h8.500" stroke="#3a3c42" stroke-width="1.200"/><path d="M391 528.500c.8-3 3-3.600 5-3.600v-1.600l3.200 2.700-3.200 2.700v-1.600c-2 0-3.500.3-5 1.400z" fill="#fff"/>
    <!-- invite -->
    <circle cx="438" cy="522.300" r="3" fill="#3a3c42"/><path d="M432 533c0-5 2.500-6.500 6-6.500 2 0 3.500.5 4.500 1.500v5z" fill="#3a3c42"/><circle cx="443" cy="529.500" r="3.600" fill="#3a3c42" stroke="#fff" stroke-width=".8"/><path d="M441.200 529.500h3.600M443 527.700v3.600" stroke="#fff" stroke-width=".9"/>
    <!-- members -->
    <circle cx="476" cy="522.300" r="3.200" fill="#3a3c42"/><path d="M469 533c0-5 3-6.500 7-6.500s7 1.500 7 6.500z" fill="#3a3c42"/>
    <!-- chat -->
    <path d="M507.500 520.500h11a1.500 1.500 0 0 1 1.500 1.500v7a1.500 1.500 0 0 1-1.500 1.500h-.5v2.500l-3-2.500h-7.500a1.500 1.500 0 0 1-1.500-1.500v-7a1.500 1.500 0 0 1 1.500-1.500z" fill="#3a3c42"/><circle cx="509.800" cy="525.500" r=".9" fill="#fff"/><circle cx="513" cy="525.500" r=".9" fill="#fff"/><circle cx="516.200" cy="525.500" r=".9" fill="#fff"/>
    <!-- end record -->
    <circle cx="549" cy="526" r="6" fill="none" stroke="#3a3c42" stroke-width="2.400"/><rect x="546.200" y="523.200" width="5.600" height="5.600" rx=".8" fill="#3a3c42"/>
    <!-- apps -->
    <g fill="#3a3c42"><rect x="587.500" y="519.500" width="5.800" height="5.800" rx="1"/><rect x="587.500" y="527" width="5.800" height="5.800" rx="1"/><rect x="595" y="527" width="5.800" height="5.800" rx="1"/></g><path d="M598 518.800l3.200 3.200-3.200 3.200-3.200-3.200z" fill="none" stroke="#3a3c42" stroke-width="1"/>
    <!-- settings gear -->
    <g transform="translate(631 526)"><g fill="#3a3c42"><rect x="-1.800" y="-7.200" width="3.600" height="14.400" rx=".8"/><rect x="-1.800" y="-7.200" width="3.600" height="14.400" rx=".8" transform="rotate(60)"/><rect x="-1.800" y="-7.200" width="3.600" height="14.400" rx=".8" transform="rotate(120)"/><circle r="5.400"/></g><circle r="2.400" fill="#fff"/></g>
    <!-- leave -->
    <rect x="965.500" y="519.500" width="50" height="23" rx="1.500" fill="#fff" stroke="#f29a98" stroke-width="1"/>
    <rect x="32" y="547.500" width="992" height="1.500" fill="#e9ebee"/>
  </svg>
  <div class="bl" style="left:20.500px;">解除静音</div><div class="bl" style="left:63.500px;">开启视频</div>
  <div class="bl" style="left:394.500px;">共享屏幕</div><div class="bl" style="left:438px;">邀请</div><div class="bl" style="left:475.500px;">成员(99+)</div><div class="bl" style="left:513px;">聊天</div><div class="bl" style="left:549.500px;">结束录制</div><div class="bl" style="left:594px;">应用</div><div class="bl" style="left:631px;">设置</div>
  <div class="t" style="left:990.500px;top:12.500px;font-size:9px;line-height:10px;color:#ee5e5b;transform:translateX(-50%);">离开会议</div>
</div>
</body></html>
